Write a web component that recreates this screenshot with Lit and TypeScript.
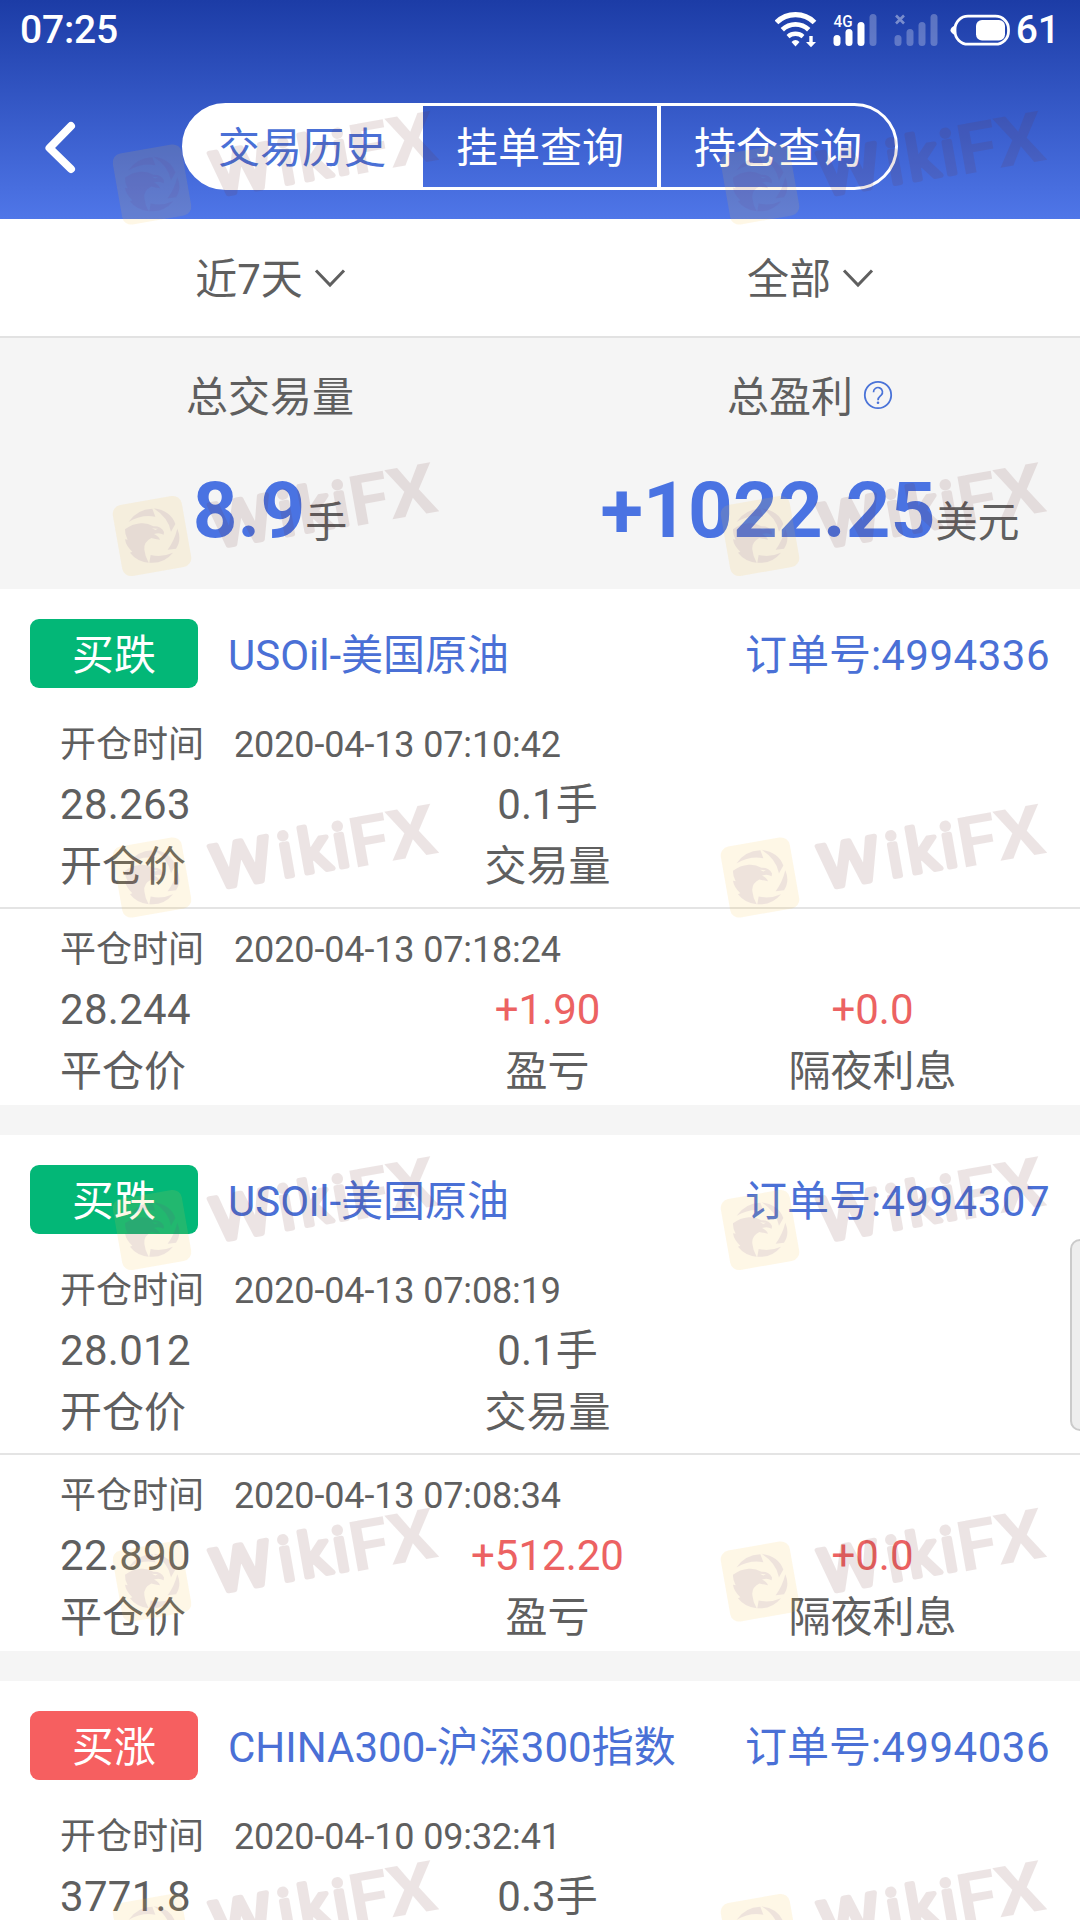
import { LitElement, html, svg, css, nothing } from "lit";
import { customElement, property } from "lit/decorators.js";

interface Trade {
  side: "down" | "up";
  symbol: string;
  order: string;
  openTime: string;
  openPrice: string;
  volume: string;
  close?: {
    time: string;
    price: string;
    profit: string;
    swap: string;
  };
}

const TRADES: Trade[] = [
  {
    side: "down",
    symbol: "USOil-美国原油",
    order: "4994336",
    openTime: "2020-04-13 07:10:42",
    openPrice: "28.263",
    volume: "0.1手",
    close: { time: "2020-04-13 07:18:24", price: "28.244", profit: "+1.90", swap: "+0.0" },
  },
  {
    side: "down",
    symbol: "USOil-美国原油",
    order: "4994307",
    openTime: "2020-04-13 07:08:19",
    openPrice: "28.012",
    volume: "0.1手",
    close: { time: "2020-04-13 07:08:34", price: "22.890", profit: "+512.20", swap: "+0.0" },
  },
  {
    side: "up",
    symbol: "CHINA300-沪深300指数",
    order: "4994036",
    openTime: "2020-04-10 09:32:41",
    openPrice: "3771.8",
    volume: "0.3手",
  },
];

const MARK_ROWS = [184.5, 536, 877.5, 1230, 1581.5, 1934];
const MARK_COLUMNS = [152, 760];

@customElement("status-bar")
export class StatusBar extends LitElement {
  static styles = css`
    :host {
      display: flex;
      align-items: center;
      height: 60px;
      padding: 0 20px 0 20px;
      color: #fff;
    }
    .time,
    .level {
      font-weight: 500;
      font-size: 39px;
      line-height: 60px;
    }
    .time {
      margin-right: auto;
      letter-spacing: -0.2px;
    }
    .wifi {
      margin-right: 16px;
    }
    .signal {
      margin-right: 17px;
    }
    .signal.empty {
      margin-right: 11px;
    }
    .battery {
      margin-right: 5px;
    }
    svg {
      display: block;
      flex: none;
    }
  `;

  private bars(x: number, filled: number) {
    const tops = [35, 29, 22, 14];
    return tops.map(
      (top, i) => svg`<rect x=${x + i * 12} y=${top} width="7" height=${46 - top} rx="3.5"
        fill="#fff" fill-opacity=${i < filled ? 1 : 0.27}></rect>`,
    );
  }

  render() {
    return html`
      <span class="time">07:25</span>
      <svg class="wifi" width="42" height="60" viewBox="775 0 42 60" fill="none" stroke="#fff">
        <path d="M776.5 22.500a27 27 0 0 1 38 0" stroke-width="5.200"></path>
        <path d="M782.3 29.800a19 19 0 0 1 26.4 0" stroke-width="4.800"></path>
        <path d="M788 36.6a11.5 11.5 0 0 1 15 0" stroke-width="4.4"></path>
        <path d="M791.5 42q4-4 8 0l-4 4.600z" fill="#fff" stroke="none"></path>
        <path d="M809.3 36h3.400v6h3.300l-5 5.200-5-5.200h3.300z" fill="#fff" stroke="none"></path>
      </svg>
      <svg class="signal" width="44" height="60" viewBox="833 0 44 60">
        ${this.bars(833.5, 3)}
        <text x="833.500" y="26.500" fill="#fff" font-size="17" font-weight="500" textLength="19" lengthAdjust="spacingAndGlyphs">4G</text>
      </svg>
      <svg class="signal empty" width="44" height="60" viewBox="894 0 44 60">
        ${this.bars(894.5, 0)}
        <path d="M896 15.500l8 8M904 15.500l-8 8" stroke="#fff" stroke-opacity=".4" stroke-width="2.600"></path>
      </svg>
      <svg class="battery" width="62" height="60" viewBox="949 0 62 60">
        <rect x="955" y="16.200" width="53.500" height="28" rx="13" fill="none" stroke="#fff" stroke-width="2.800"></rect>
        <path d="M954.500 25.500q-8 4.700 0 9.400z" fill="#fff"></path>
        <rect x="976" y="20" width="29" height="20.500" rx="6" fill="#fff"></rect>
      </svg>
      <span class="level">61</span>
    `;
  }
}

@customElement("trade-card")
export class TradeCard extends LitElement {
  @property({ attribute: false }) trade!: Trade;

  static styles = css`
    :host {
      display: block;
      background: #fff;
      color: #5f5f5f;
      font-size: 42px;
      line-height: 50px;
      white-space: nowrap;
    }
    .head {
      display: flex;
      height: 69px;
      line-height: 74px;
      padding: 30px 30px 26px;
      color: #4a70d6;
    }
    .badge {
      width: 168px;
      height: 69px;
      margin-right: 30px;
      border-radius: 9px;
      background: #03b777;
      color: #fff;
      text-align: center;
    }
    .badge.up {
      background: #f65f60;
    }
    .order {
      margin-left: auto;
    }
    .digits {
      letter-spacing: 0.5px;
    }
    .section {
      display: grid;
      grid-template-columns: repeat(3, 325px);
      padding: 0 45px 7px 60px;
      grid-template-rows: 62px 57px 67px;
      align-items: center;
      text-align: center;
    }
    .section.close {
      grid-template-rows: 62px 58px 66px;
      padding: 10px 45px 0 60px;
      border-top: 2px solid #e4e4e4;
    }
    .when {
      grid-column: 1 / -1;
      display: flex;
      gap: 30px;
      font-size: 36px;
    }
    .stamp {
      letter-spacing: -0.14px;
    }
    .first {
      grid-column: 1;
      text-align: left;
    }
    .price {
      letter-spacing: 0.3px;
    }
    .gain {
      color: #ec6262;
    }
  `;

  render() {
    const t = this.trade;
    return html`
      <div class="head">
        <span class="badge ${t.side}">${t.side === "down" ? "买跌" : "买涨"}</span>
        <span>${t.symbol}</span>
        <span class="order">订单号:<span class="digits">${t.order}</span></span>
      </div>
      <div class="section">
        <div class="when"><span>开仓时间</span><span class="stamp">${t.openTime}</span></div>
        <span class="first price">${t.openPrice}</span>
        <span>${t.volume}</span>
        ${t.close
          ? html`<span class="first">开仓价</span><span>交易量</span>`
          : nothing}
      </div>
      ${t.close
        ? html`<div class="section close">
            <div class="when"><span>平仓时间</span><span class="stamp">${t.close.time}</span></div>
            <span class="first price">${t.close.price}</span>
            <span class="gain">${t.close.profit}</span>
            <span class="gain">${t.close.swap}</span>
            <span class="first">平仓价</span>
            <span>盈亏</span>
            <span>隔夜利息</span>
          </div>`
        : nothing}
    `;
  }
}

@customElement("brand-marks")
export class BrandMarks extends LitElement {
  static styles = css`
    :host {
      display: block;
      pointer-events: none;
    }
    svg {
      display: block;
    }
    .word {
      font-family: Roboto, sans-serif;
      fill: #6b2e2e;
      stroke: #6b2e2e;
    }
    .soft {
      font-weight: 400;
      font-size: 61px;
      stroke-width: 5px;
      stroke-linejoin: round;
    }
    .sharp {
      font-weight: 700;
      font-size: 70px;
      stroke-width: 0;
    }
  `;

  private mark(x: number, y: number) {
    return svg`<g transform="translate(${x} ${y})">
      <rect x="-35" y="-36" width="70" height="72" rx="9" transform="rotate(-10)" fill="#fac03c" opacity=".13"></rect>
      <g transform="scale(.3333) translate(-180 -262)" fill="#6a3a90" opacity=".1" fill-rule="evenodd">
        <path d="M110 219Q135 182 181 180L190 204Q150 196 110 219z"></path>
        <path d="M185 179Q235 185 250 226L237 249Q229 207 185 179z"></path>
        <path d="M256 240Q270 274 252 300L227 303Q247 276 256 240z"></path>
        <path d="M243 312Q215 346 172 342L176 319Q210 327 243 312z"></path>
        <path d="M99 242Q120 226 146 224Q165 222 184 233Q208 232 216 250L215 258Q202 250 186 256Q200 263 204 273Q190 271 178 268Q154 280 157 303Q159 324 170 342Q134 338 114 312L121 309Q102 292 99 272L107 273Q98 257 99 242zM180 239L190 244L198 240z"></path>
      </g>
      <g class="word" transform="rotate(-10)" opacity=".12">
        <text class="soft" y="22.500" x="60" textLength="61" lengthAdjust="spacingAndGlyphs">W</text>
        <text class="soft" y="22.500" x="128.500">i</text>
        <text class="soft" y="22.500" x="149">k</text>
        <text class="soft" y="22.500" x="184">i</text>
        <text class="sharp" y="25.500" x="200" textLength="40" lengthAdjust="spacingAndGlyphs">F</text>
        <text class="sharp" y="25.500" x="239" textLength="49" lengthAdjust="spacingAndGlyphs">X</text>
      </g>
    </g>`;
  }

  render() {
    return html`<svg width="1080" height="1920" viewBox="0 0 1080 1920">
      ${MARK_ROWS.map((y) => MARK_COLUMNS.map((x) => this.mark(x, y)))}
    </svg>`;
  }
}

@customElement("app-root")
export class AppRoot extends LitElement {
  static styles = css`
    :host {
      display: block;
      position: relative;
      width: 1080px;
      height: 1920px;
      overflow: hidden;
      background: #f5f5f5;
      color: #5f5f5f;
      font-family: Roboto, "Noto Sans CJK SC", sans-serif;
      font-size: 42px;
      line-height: 50px;
    }
    .top {
      height: 219px;
      background: linear-gradient(#1c3ca6, #4f76e8);
    }
    .nav {
      display: flex;
      align-items: center;
      padding: 43px 0 0 40px;
    }
    .back {
      width: 40px;
      height: 60px;
      margin-right: 102px;
    }
    .tabs {
      display: flex;
      box-sizing: border-box;
      width: 716px;
      height: 87px;
      border: 3px solid #fff;
      border-radius: 44px;
      overflow: hidden;
      line-height: 85px;
      color: #fff;
      text-align: center;
      background: linear-gradient(90deg, #fff 200px, transparent 200px) border-box;
    }
    .tab {
      width: 234px;
      border-right: 4px solid #fff;
    }
    .tab.active {
      box-sizing: border-box;
      width: 238px;
      border: 0;
      padding-right: 4px;
      background: #fff;
      color: #4a70d6;
    }
    .tab.last {
      flex: 1;
      border: 0;
    }
    .filters {
      display: grid;
      grid-template-columns: 1fr 1fr;
      height: 117px;
      background: #fff;
      border-bottom: 2px solid #e2e2e2;
    }
    .filter {
      display: flex;
      align-items: center;
      justify-content: center;
      gap: 11px;
      padding: 5px 0 0 1px;
    }
    .filter svg {
      margin-bottom: 5px;
    }
    .summary {
      display: grid;
      grid-template-columns: 1fr 1fr;
      height: 251px;
    }
    .total {
      display: flex;
      flex-direction: column;
      align-items: center;
    }
    .label {
      display: flex;
      align-items: center;
      gap: 10px;
      height: 60px;
      margin-top: 30px;
    }
    .label svg {
      margin-bottom: 6px;
    }
    .amount {
      margin-top: 33px;
      line-height: 100px;
      white-space: nowrap;
    }
    .figure {
      font-size: 78px;
      font-weight: 700;
      color: #4a73e2;
      letter-spacing: 0.2px;
    }
    .list {
      display: flex;
      flex-direction: column;
      gap: 30px;
    }
    .handle {
      position: absolute;
      box-sizing: border-box;
      left: 1070px;
      top: 1239px;
      width: 20px;
      height: 192px;
      border: 2px solid #cbcbcb;
      border-radius: 12px;
      background: #eee;
    }
    .marks {
      position: absolute;
      inset: 0;
    }
    svg {
      display: block;
      flex: none;
    }
  `;

  private chevron() {
    return html`<svg width="32" height="22" viewBox="0 0 32 22" fill="none" stroke="#5f5f5f" stroke-width="3">
      <path d="M2 3.500 16 18 30 3.500"></path>
    </svg>`;
  }

  render() {
    return html`
      <div class="top">
        <status-bar></status-bar>
        <div class="nav">
          <svg class="back" viewBox="0 0 40 60" fill="none" stroke="#fff" stroke-width="8" stroke-linecap="round" stroke-linejoin="round">
            <path d="M31 9 9.500 31 31 52"></path>
          </svg>
          <div class="tabs">
            <span class="tab active">交易历史</span>
            <span class="tab">挂单查询</span>
            <span class="tab last">持仓查询</span>
          </div>
        </div>
      </div>
      <div class="filters">
        <div class="filter"><span>近7天</span>${this.chevron()}</div>
        <div class="filter"><span>全部</span>${this.chevron()}</div>
      </div>
      <div class="summary">
        <div class="total">
          <div class="label">总交易量</div>
          <div class="amount"><span class="figure">8.9</span>手</div>
        </div>
        <div class="total">
          <div class="label">
            <span>总盈利</span>
            <svg width="30" height="30" viewBox="0 0 30 30" fill="none" stroke="#4a73d8" stroke-width="1.800">
              <circle cx="15" cy="15" r="13.200"></circle>
              <path d="M10.500 12.200a4.500 4.500 0 1 1 7.700 3c-2 1.700-3.200 2.400-3.200 5" stroke-width="1.700"></path>
              <circle cx="15" cy="22.800" r="1.300" fill="#4a73d8" stroke="none"></circle>
            </svg>
          </div>
          <div class="amount"><span class="figure">+1022.25</span>美元</div>
        </div>
      </div>
      <div class="list">${TRADES.map((t) => html`<trade-card .trade=${t}></trade-card>`)}</div>
      <div class="handle"></div>
      <brand-marks class="marks"></brand-marks>
    `;
  }
}
